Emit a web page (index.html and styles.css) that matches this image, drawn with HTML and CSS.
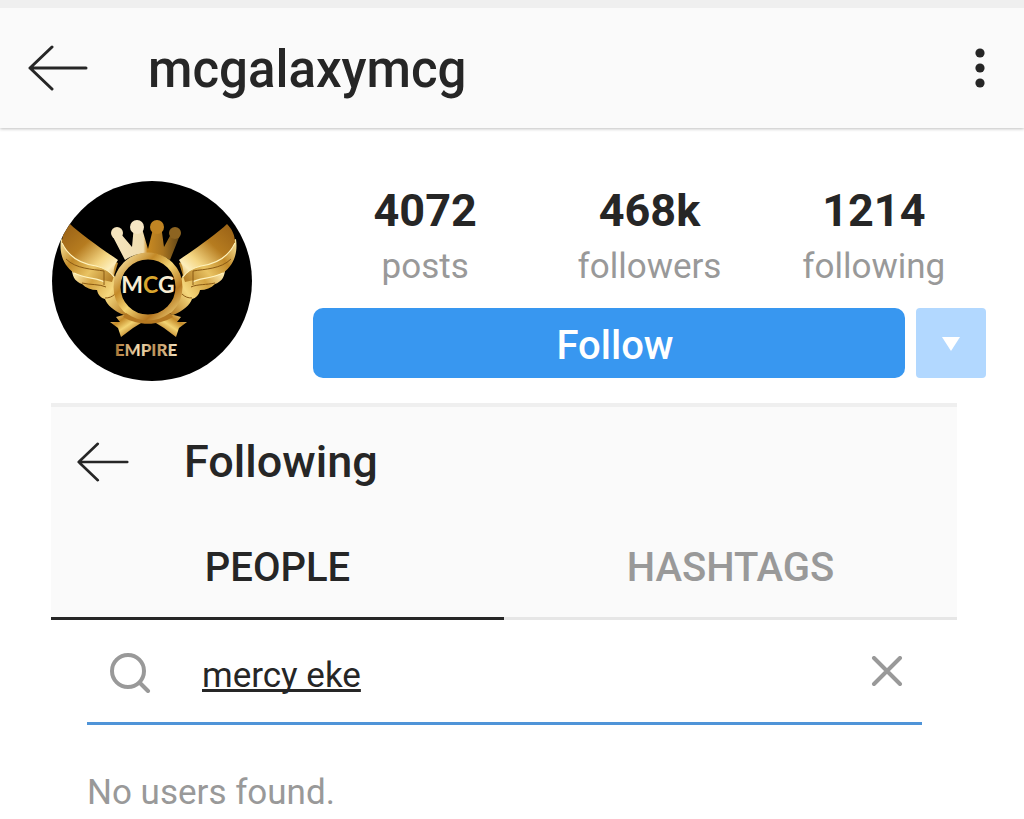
FILE: index.html
```html
<!DOCTYPE html>
<html lang="en">
<head>
    <meta charset="UTF-8">
    <meta name="viewport" content="width=device-width, initial-scale=1.0">
    <title>mcgalaxymcg</title>
    <link rel="stylesheet" href="styles.css">
</head>
<body>

    <header class="topbar">
        <button class="icon-btn" aria-label="Back">
            <svg width="60" height="46" viewBox="0 0 60 46" class="arrow"><path d="M24 2L2 23L24 44M2 23H58"/></svg>
        </button>
        <h1>mcgalaxymcg</h1>
        <button class="icon-btn" aria-label="More options">
            <svg width="10" height="40" viewBox="0 0 10 40" fill="#262626">
                <circle cx="5" cy="5" r="4.6"/><circle cx="5" cy="20" r="4.6"/><circle cx="5" cy="35" r="4.6"/>
            </svg>
        </button>
    </header>

    <main>
        <section class="profile">
            <svg class="avatar" viewBox="0 0 200 200" role="img" aria-label="MCG Empire logo">
                <defs>
                    <clipPath id="round"><circle cx="100" cy="100" r="100"/></clipPath>
                    <linearGradient id="feather1" gradientUnits="userSpaceOnUse" x1="14" y1="44" x2="66" y2="100">
                        <stop offset="0" stop-color="#9a6216"/>
                        <stop offset=".35" stop-color="#b67c20"/>
                        <stop offset=".65" stop-color="#f4d683"/>
                        <stop offset=".8" stop-color="#fdeebb"/>
                        <stop offset="1" stop-color="#d09a33"/>
                    </linearGradient>
                    <linearGradient id="feather2" gradientUnits="userSpaceOnUse" x1="8" y1="62" x2="62" y2="104">
                        <stop offset="0" stop-color="#f8e39a"/>
                        <stop offset=".3" stop-color="#c28a28"/>
                        <stop offset=".6" stop-color="#e9c363"/>
                        <stop offset="1" stop-color="#a8701a"/>
                    </linearGradient>
                    <linearGradient id="feather3" gradientUnits="userSpaceOnUse" x1="20" y1="92" x2="78" y2="132">
                        <stop offset="0" stop-color="#fff0b8"/>
                        <stop offset=".3" stop-color="#d6a440"/>
                        <stop offset=".6" stop-color="#f5d87e"/>
                        <stop offset="1" stop-color="#b0741d"/>
                    </linearGradient>
                    <linearGradient id="ring" x1="0" y1="0" x2="1" y2="1">
                        <stop offset="0" stop-color="#fff0b4"/>
                        <stop offset=".3" stop-color="#c48a28"/>
                        <stop offset=".5" stop-color="#f3d473"/>
                        <stop offset=".75" stop-color="#b67720"/>
                        <stop offset="1" stop-color="#f7df86"/>
                    </linearGradient>
                    <linearGradient id="crown">
                        <stop offset="0" stop-color="#f6e6c0"/>
                        <stop offset=".46" stop-color="#efdcae"/>
                        <stop offset=".52" stop-color="#c98a22"/>
                        <stop offset=".75" stop-color="#a87420"/>
                        <stop offset="1" stop-color="#5d4316"/>
                    </linearGradient>
                    <linearGradient id="word">
                        <stop offset="0" stop-color="#a9712f"/>
                        <stop offset=".4" stop-color="#f3dfb8"/>
                        <stop offset=".65" stop-color="#b98b50"/>
                        <stop offset="1" stop-color="#f5e7c8"/>
                    </linearGradient>
                    <g id="side">
                        <path fill="url(#feather3)" d="M20 90C21 97 24 101 30 103C34 107 39 109 45 109C46 114 49 117 53 118C55 124 62 130 72 134L82 128C70 120 64 110 64 98L58 86Z"/>
                        <path fill="url(#feather2)" d="M9 58C7 72 11 84 22 92C34 97 48 98 60 101L66 82L30 66Z"/>
                        <path fill="url(#feather1)" d="M18 43C27 52 50 68 66 79C62 84 61 90 62 96C58 90 52 87 44 85C30 83 17 77 10 62C10 54 13 48 18 43Z"/>
                        <path fill="none" stroke="#fff3bd" stroke-width="1.2" d="M10 62C17 77 30 83 44 85C52 87 58 90 62 96M22 92C34 98 46 97 52 101"/>
                        <path fill="none" stroke="#8a5a14" stroke-width="1" d="M14 78C24 88 40 88 52 90V104M30 102C38 104 48 103 54 106M53 117C57 117 60 116 63 113"/>
                        <path fill="url(#ring)" d="M58 141L68 141L64 136L78 132L94 139L81 147L69 156L66 147Z"/>
                    </g>
                </defs>
                <g clip-path="url(#round)">
                    <rect width="200" height="200"/>
                    <path fill="url(#crown)" d="M60 54L69 53L80 66L82 44H89L96 68L102 44H109L112 66L119 53L128 54L118 79C106 70 85 70 73 79Z"/>
                    <circle cx="65" cy="52" r="6" fill="#f4e4bd"/>
                    <circle cx="85" cy="46" r="7" fill="#f6e6c4"/>
                    <circle cx="105" cy="46" r="7" fill="#c08423"/>
                    <circle cx="123" cy="52" r="6" fill="#8d6421"/>
                    <use href="#side"/>
                    <use href="#side" transform="matrix(-1 0 0 1 193 0)"/>
                    <circle cx="96" cy="106" r="31" fill="#000" stroke="url(#ring)" stroke-width="7"/>
                    <path fill="#b57922" d="M74 132C88 142 104 142 118 132L121 136C106 145 86 145 71 136Z"/>
                    <text class="monogram" x="96" y="112" text-anchor="middle">M<tspan fill="#d9a62e">C</tspan>G</text>
                    <text class="empire" x="94" y="175" text-anchor="middle">EMPIRE</text>
                </g>
            </svg>

            <div class="info">
                <ul class="stats">
                    <li><strong>4072</strong><span>posts</span></li>
                    <li><strong>468k</strong><span>followers</span></li>
                    <li><strong>1214</strong><span>following</span></li>
                </ul>
                <div class="actions">
                    <button class="follow">Follow</button>
                    <button class="more" aria-label="Suggestions">
                        <svg width="18" height="14" viewBox="0 0 18 14"><path d="M0 0H18L9 14Z" fill="#fff"/></svg>
                    </button>
                </div>
            </div>
        </section>

        <section class="panel">
            <div class="panel-top">
                <div class="panel-head">
                    <button class="icon-btn" aria-label="Back to profile">
                        <svg width="52" height="40" viewBox="0 0 60 46" class="arrow"><path d="M24 2L2 23L24 44M2 23H58"/></svg>
                    </button>
                    <h2>Following</h2>
                </div>
                <nav class="tabs">
                    <button class="tab active">PEOPLE</button>
                    <button class="tab">HASHTAGS</button>
                </nav>
            </div>

            <div class="results">
                <div class="search">
                    <svg width="42" height="42" viewBox="0 0 42 42" fill="none" stroke="#999" stroke-width="4" stroke-linecap="round">
                        <circle cx="18" cy="20" r="16"/><path d="M30 32L38 40"/>
                    </svg>
                    <input type="text" id="search" value="mercy eke" aria-label="Search people">
                    <button class="icon-btn" aria-label="Clear search">
                        <svg width="32" height="32" viewBox="0 0 32 32" fill="none" stroke="#999" stroke-width="4" stroke-linecap="round"><path d="M3 2L29 28M29 2L3 28"/></svg>
                    </button>
                </div>
                <p class="empty">No users found.</p>
            </div>
        </section>
    </main>

</body>
</html>
```

FILE: styles.css
```css
*{
    margin: 0;
    padding: 0;
    box-sizing: border-box;
}
body{
    background: #fff;
    color: #262626;
    font-family: Roboto, "Liberation Sans", sans-serif;
}
button{
    border: none;
    background: none;
    font-family: inherit;
    color: inherit;
    cursor: pointer;
}
svg{
    display: block;
}
.arrow{
    fill: none;
    stroke: #262626;
    stroke-width: 3;
    stroke-linecap: round;
    stroke-linejoin: round;
}

/* top bar */
.topbar{
    display: flex;
    align-items: center;
    height: 128px;
    padding: 0 39px 0 28px;
    background: #fafafa;
    border-top: 8px solid #efefef;
    box-shadow: 0 1px 3px rgba(0, 0, 0, 0.25);
}
.topbar h1{
    flex: 1;
    margin-left: 60px;
    padding-top: 3px;
    font-size: 51px;
    font-weight: 500;
    line-height: 60px;
}

/* profile */
.profile{
    display: flex;
    padding: 53px 38px 0 52px;
}
.avatar{
    width: 200px;
    height: 200px;
    flex-shrink: 0;
}
.monogram{
    font: 700 23px Lato, sans-serif;
    fill: #f7ecd2;
}
.empire{
    font: 900 17px Lato, sans-serif;
    fill: url(#word);
}
.info{
    flex: 1;
    margin-left: 61px;
}
.stats{
    display: grid;
    grid-template-columns: repeat(3, 1fr);
    list-style: none;
    text-align: center;
}
.stats strong{
    display: block;
    font-size: 45px;
    line-height: 60px;
}
.stats span{
    display: block;
    font-size: 35px;
    line-height: 52px;
    color: #999;
}
.actions{
    display: flex;
    gap: 11px;
    height: 70px;
    margin-top: 15px;
}
.follow{
    flex: 1;
    padding: 4px 0 0 12px;
    border-radius: 10px;
    background: #3897f0;
    color: #fff;
    font-size: 40px;
    font-weight: 500;
}
.more{
    display: flex;
    align-items: center;
    justify-content: center;
    width: 70px;
    padding-top: 2px;
    border-radius: 4px;
    background: #b2d8ff;
}

/* following list */
.panel{
    margin: 22px 67px 0 51px;
}
.panel-top{
    background: #fafafa;
    border-top: 4px solid #efefef;
}
.panel-head{
    display: flex;
    align-items: center;
    height: 110px;
    padding-left: 26px;
}
.panel-head h2{
    margin-left: 55px;
    font-size: 45px;
    font-weight: 500;
    line-height: 60px;
}
.tabs{
    display: grid;
    grid-template-columns: 1fr 1fr;
}
.tab{
    height: 103px;
    border-bottom: 3px solid #e6e6e6;
    color: #999;
    font-size: 40px;
    font-weight: 500;
}
.active{
    border-color: #262626;
    color: #262626;
}
.results{
    padding: 0 35px 0 36px;
}
.search{
    display: flex;
    align-items: center;
    height: 105px;
    padding: 2px 19px 0 23px;
    border-bottom: 3px solid #4f94d8;
}
.search input{
    flex: 1;
    min-width: 0;
    margin-left: 50px;
    padding-top: 6px;
    border: none;
    outline: none;
    background: none;
    color: #262626;
    font-family: inherit;
    font-size: 35px;
    text-decoration: underline;
    text-decoration-thickness: 3px;
    text-decoration-skip-ink: none;
}
.empty{
    margin-top: 42px;
    color: #999;
    font-size: 35px;
    line-height: 52px;
}
```
